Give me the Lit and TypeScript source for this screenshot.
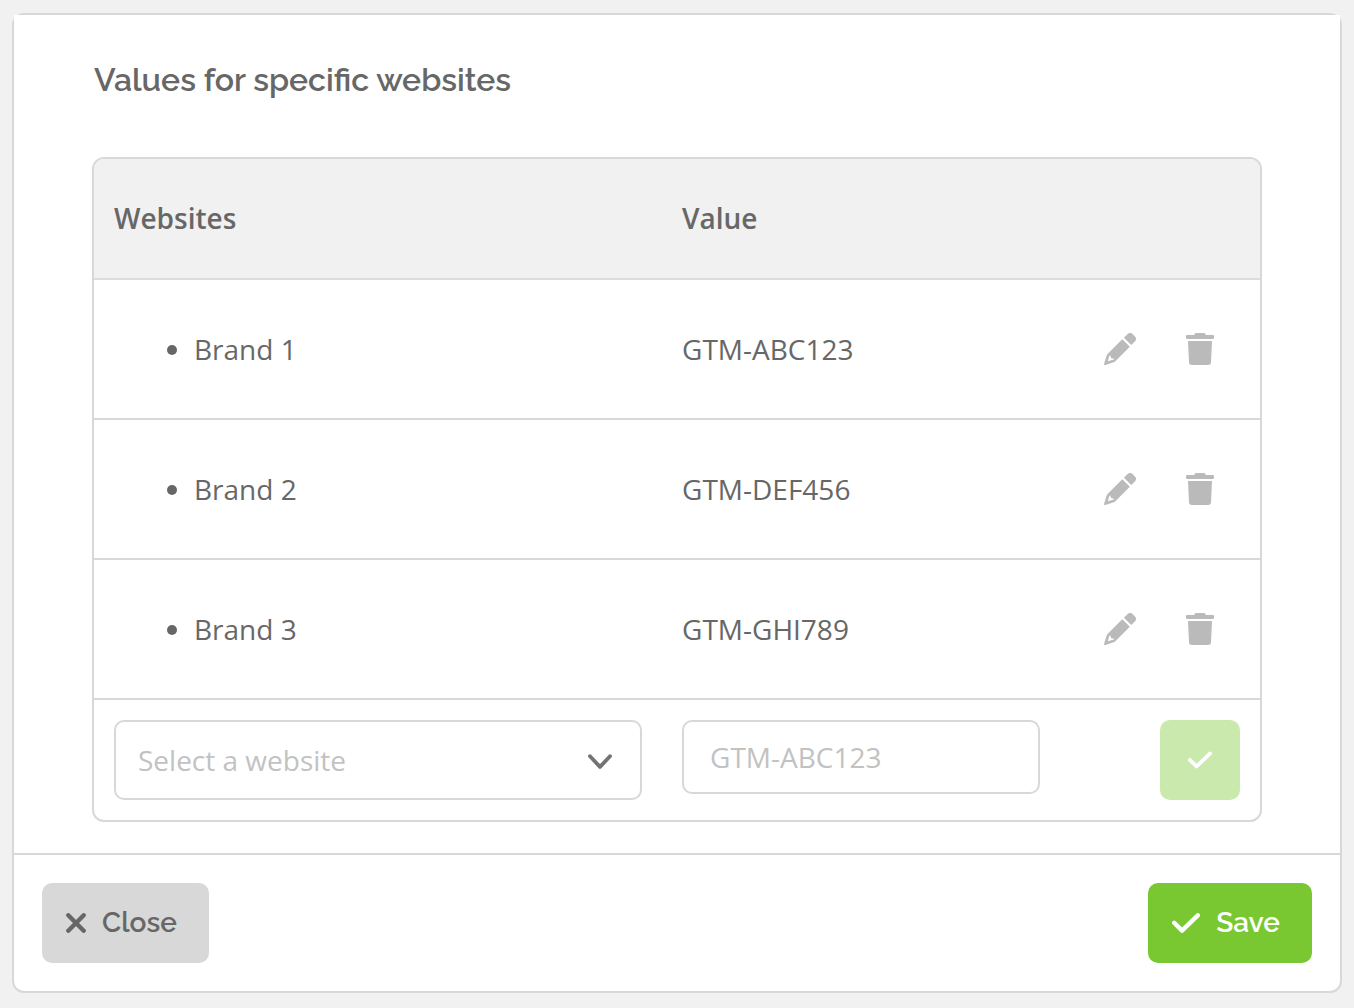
import { LitElement, html, css, svg } from "lit";
import { customElement, state } from "lit/decorators.js";

interface SiteValue {
  site: string;
  value: string;
}

const pencilIcon = svg`
  <svg class="icon" width="32" height="32" viewBox="0 0 32 32" aria-hidden="true">
    <path fill="currentColor" d="M19.9 4.800 23.600 1.100a3.500 3.500 0 0 1 5 0l2.300 2.300a3.500 3.500 0 0 1 0 5L27.200 12.100z"/>
    <path fill="currentColor" fill-rule="evenodd" d="M18.300 6.300 25.800 13.800 11.600 28a6 6 0 0 1-2.700 1.600L1.300 31.900a1 1 0 0 1-1.200-1.200L2.500 23.100a6 6 0 0 1 1.600-2.700zM6.200 22.200 5.200 23.200 3.800 28.200 9 26.800 10.600 26.100 7.100 25z"/>
  </svg>`;

const trashIcon = svg`
  <svg class="icon" width="28" height="32" viewBox="0 0 28 32" aria-hidden="true">
    <path fill="currentColor" d="M1.2 2H8l.8-1.2A2 2 0 0 1 10.4 0h7.2a2 2 0 0 1 1.6.8L20 2h6.8A1.2 1.2 0 0 1 28 3.2v1.6A1.2 1.2 0 0 1 26.8 6H1.2A1.2 1.2 0 0 1 0 4.8V3.2A1.2 1.2 0 0 1 1.2 2z"/>
    <path fill="currentColor" d="M2 8h24l-1 21.200a3 3 0 0 1-3 2.800H6a3 3 0 0 1-3-2.800z"/>
  </svg>`;

const crossIcon = svg`
  <svg class="icon" width="20" height="20" viewBox="0 0 20 20" aria-hidden="true">
    <path fill="none" stroke="currentColor" stroke-width="4.4" stroke-linecap="round" d="M2.300 2.300 17.700 17.700M17.700 2.300 2.300 17.700"/>
  </svg>`;

const checkIcon = (width: number, height: number) => svg`
  <svg class="icon" width=${width} height=${height} viewBox="0 0 28 20" aria-hidden="true">
    <path fill="none" stroke="currentColor" stroke-width="4.4" stroke-linecap="round" stroke-linejoin="round" d="M2.200 9.800 10 17.600 25.800 2.300"/>
  </svg>`;

const chevronIcon = svg`
  <svg class="chevron" width="24" height="18" viewBox="0 0 24 18" aria-hidden="true">
    <path fill="none" stroke="currentColor" stroke-width="3.800" stroke-linecap="round" stroke-linejoin="round" d="M2 5.200 12 15.900 22 5.200"/>
  </svg>`;

@customElement("app-root")
export class AppRoot extends LitElement {
  static styles = css`
    :host {
      display: block;
      box-sizing: border-box;
      min-height: 100vh;
      padding: 13px 12px 15px;
      background: #f1f1f1;
      color: #676767;
      font-family: "Open Sans", "Noto Sans", sans-serif;
      font-size: 28px;
      line-height: 40px;
    }
    * {
      box-sizing: border-box;
    }
    .card {
      border: 2px solid #d8d8d8;
      border-radius: 12px;
      background: #fff;
    }
    .body {
      padding: 40px 78px 31px;
      background: #fff;
    }
    .title {
      margin: 0 0 52px 2px;
      font-family: Raleway, Lato, sans-serif;
      font-size: 32px;
      line-height: 50px;
      font-weight: 600;
    }
    .frame {
      border: 2px solid #d8d8d8;
      border-radius: 12px;
      overflow: hidden;
    }
    table {
      width: 100%;
      table-layout: fixed;
      border-collapse: separate;
      border-spacing: 0;
    }
    .col-site {
      width: 48.72%;
    }
    .col-actions {
      width: 200px;
    }
    th {
      height: 121px;
      padding: 0 20px 2px;
      border-bottom: 2px solid #dcdcdc;
      background: #f1f1f1;
      font-weight: 600;
      text-align: left;
    }
    td {
      height: 140px;
      padding: 0 20px;
      border-bottom: 2px solid #d8d8d8;
    }
    .entry td {
      height: 120px;
      padding: 20px;
      border-bottom: 0;
      vertical-align: top;
    }
    .sites {
      margin: 0;
      padding: 0 0 0 80px;
    }
    .actions {
      display: flex;
      justify-content: flex-end;
    }
    button {
      display: inline-flex;
      align-items: center;
      justify-content: center;
      height: 80px;
      padding: 0;
      border: 0;
      border-radius: 10px;
      background: none;
      font-family: Raleway, Lato, sans-serif;
      font-size: 28px;
      font-weight: 600;
      cursor: pointer;
    }
    .icon {
      display: block;
      flex: none;
    }
    .tool {
      width: 80px;
      color: #bababa;
    }
    .add {
      width: 80px;
      background: #c9e9ad;
      color: #fff;
    }
    .picker {
      display: grid;
      align-items: center;
    }
    .picker > * {
      grid-area: 1 / 1;
    }
    .chevron {
      justify-self: end;
      margin-right: 30px;
      color: #737373;
      pointer-events: none;
    }
    select,
    input {
      width: 100%;
      margin: 0;
      border: 2px solid #d8d8d8;
      border-radius: 10px;
      background: #fff;
      color: #c2c2c2;
      font: inherit;
    }
    select {
      appearance: none;
      height: 80px;
      padding: 0 64px 0 22px;
    }
    input {
      display: block;
      height: 74px;
      padding: 0 26px;
    }
    input::placeholder {
      color: #c2c2c2;
      opacity: 1;
    }
    .footer {
      display: flex;
      justify-content: space-between;
      padding: 28px;
      border-top: 2px solid #d8d8d8;
    }
    .close,
    .save {
      gap: 16px;
      padding: 0 32px 0 24px;
    }
    .label {
      padding-bottom: 2px;
    }
    .close {
      background: #d8d8d8;
      color: #676767;
    }
    .save {
      background: #79c832;
      color: #fff;
    }
  `;

  @state() private rows: SiteValue[] = [
    { site: "Brand 1", value: "GTM-ABC123" },
    { site: "Brand 2", value: "GTM-DEF456" },
    { site: "Brand 3", value: "GTM-GHI789" },
  ];

  private remove(row: SiteValue) {
    this.rows = this.rows.filter((r) => r !== row);
  }

  private renderRow(row: SiteValue) {
    return html`
      <tr>
        <td>
          <ul class="sites">
            <li>${row.site}</li>
          </ul>
        </td>
        <td>${row.value}</td>
        <td>
          <div class="actions">
            <button class="tool" type="button" aria-label="Edit ${row.site}">${pencilIcon}</button>
            <button class="tool" type="button" aria-label="Delete ${row.site}" @click=${() => this.remove(row)}>
              ${trashIcon}
            </button>
          </div>
        </td>
      </tr>
    `;
  }

  render() {
    return html`
      <main class="card">
        <section class="body">
          <h1 class="title">Values for specific websites</h1>
          <div class="frame">
            <table>
              <colgroup>
                <col class="col-site" />
                <col />
                <col class="col-actions" />
              </colgroup>
              <thead>
                <tr>
                  <th scope="col">Websites</th>
                  <th scope="col">Value</th>
                  <th scope="col" aria-label="Actions"></th>
                </tr>
              </thead>
              <tbody>
                ${this.rows.map((row) => this.renderRow(row))}
                <tr class="entry">
                  <td>
                    <div class="picker">
                      <select aria-label="Website">
                        <option value="">Select a website</option>
                      </select>
                      ${chevronIcon}
                    </div>
                  </td>
                  <td><input type="text" aria-label="Value" placeholder="GTM-ABC123" /></td>
                  <td>
                    <div class="actions">
                      <button class="add" type="button" aria-label="Add value">${checkIcon(24, 18)}</button>
                    </div>
                  </td>
                </tr>
              </tbody>
            </table>
          </div>
        </section>
        <footer class="footer">
          <button class="close" type="button">${crossIcon}<span class="label">Close</span></button>
          <button class="save" type="button">${checkIcon(28, 20)}<span class="label">Save</span></button>
        </footer>
      </main>
    `;
  }
}
